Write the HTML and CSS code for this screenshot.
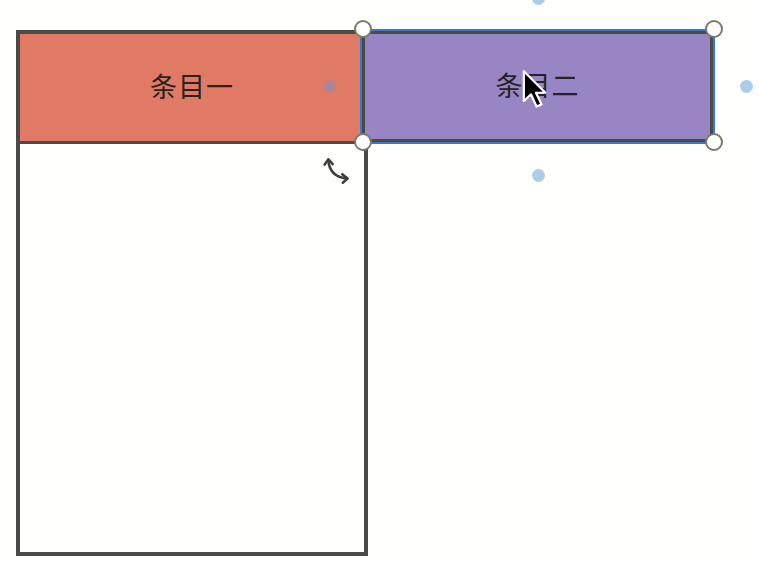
FILE: index.html
```html
<!DOCTYPE html>
<html lang="zh-CN">
<head>
    <meta charset="UTF-8">
    <meta name="viewport" content="width=device-width, initial-scale=1.0">
    <title>泳道</title>
    <link rel="stylesheet" href="styles.css">
</head>
<body>

    <div class="canvas">
        <!-- lane frame with its first header -->
        <div class="lane">
            <div class="lane-head red">
                <span class="label">条目一</span>
            </div>
            <div class="lane-body"></div>
        </div>

        <span class="anchor gray" style="left: 330px; top: 86px;"></span>

        <!-- rotate hint -->
        <svg class="rotate" width="32" height="32" viewBox="0 0 30 30">
            <path d="M6 5 Q7 20 23 22" fill="none" stroke="#3f3f3f" stroke-width="2.4" stroke-linecap="round"/>
            <path d="M2.5 9 L6 4 L10 8.5" fill="none" stroke="#3f3f3f" stroke-width="2.4" stroke-linecap="round" stroke-linejoin="round"/>
            <path d="M19 18 L24 22 L19.5 26" fill="none" stroke="#3f3f3f" stroke-width="2.4" stroke-linecap="round" stroke-linejoin="round"/>
        </svg>

        <!-- dragged node -->
        <div class="node purple">
            <span class="label">条目二</span>
        </div>

        <span class="handle" style="left: 363px; top: 29px;"></span>
        <span class="handle" style="left: 714px; top: 29px;"></span>
        <span class="handle" style="left: 363px; top: 142px;"></span>
        <span class="handle" style="left: 714px; top: 142px;"></span>

        <span class="anchor blue" style="left: 538px; top: -2px;"></span>
        <span class="anchor blue" style="left: 746px; top: 86px;"></span>
        <span class="anchor blue" style="left: 538px; top: 175px;"></span>

        <svg class="cursor" width="30" height="42" viewBox="0 0 26 38">
            <path d="M2 2 L2 29 L8.5 23 L13.5 34 L18 32 L13 21.5 L21.5 21.5 Z" fill="#000" stroke="#fff" stroke-width="2" stroke-linejoin="round"/>
        </svg>
    </div>

</body>
</html>
```

FILE: styles.css
```css
body {
    margin: 0;
    padding: 0;
    background: #fffffd;
    font-family: "Noto Sans CJK SC", "Noto Sans", sans-serif;
    color: #222;
}

.canvas {
    position: relative;
    width: 760px;
    height: 566px;
    overflow: hidden;
    padding: 30px 0 0 16px;
    box-sizing: border-box;
}

.lane {
    width: 352px;
    height: 526px;
    border: 4px solid #4a4a47;
    box-sizing: border-box;
    display: flex;
    flex-direction: column;
}

.lane-head {
    height: 107px;
    border-bottom: 3px solid #4a4a47;
    display: flex;
    align-items: center;
    justify-content: center;
    flex-shrink: 0;
}

.lane-body {
    flex: 1;
}

.red {
    background-color: #e07a64;
}

.purple {
    background-color: #9886c4;
}

.label {
    font-size: 27px;
    line-height: 1;
    color: #262321;
    letter-spacing: 1px;
    margin-top: -5px;
}

/* shape being dragged over the lane */
.node {
    position: absolute;
    left: 362px;
    top: 31px;
    width: 351px;
    height: 111px;
    box-sizing: border-box;
    border: 3px solid #4a4a47;
    outline: 2px solid #2f7cd2;
    display: flex;
    align-items: center;
    justify-content: center;
}

.handle {
    position: absolute;
    width: 14px;
    height: 14px;
    margin: -9px 0 0 -9px;
    border: 2px solid #7a7a68;
    border-radius: 50%;
    background: #fff;
}

.anchor {
    position: absolute;
    width: 13px;
    height: 13px;
    margin: -6px 0 0 -6px;
    border-radius: 50%;
}

.anchor.blue {
    background: #aecdea;
}

.anchor.gray {
    background: #a9879a;
    width: 12px;
    height: 12px;
}

.rotate {
    position: absolute;
    left: 322px;
    top: 155px;
}

.cursor {
    position: absolute;
    left: 521px;
    top: 69px;
}
```
